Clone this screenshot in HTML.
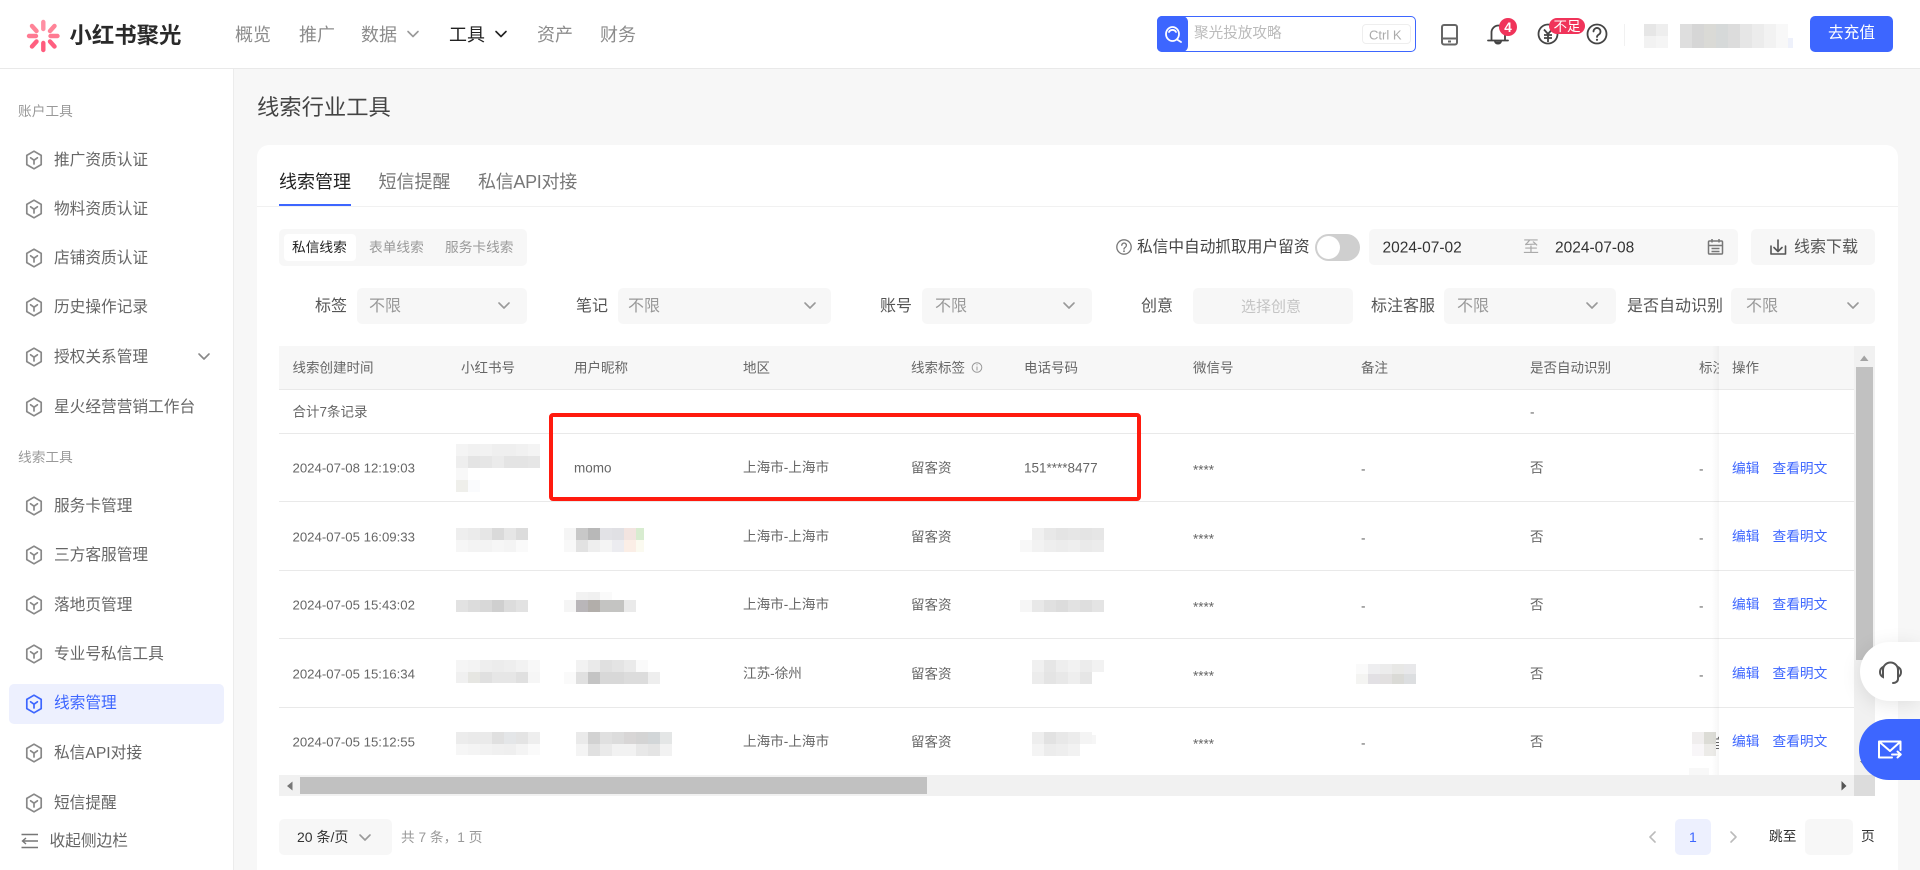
<!DOCTYPE html>
<html lang="zh-CN"><head><meta charset="utf-8"><title>线索行业工具</title>
<style>
html,body{margin:0;padding:0;width:1920px;height:870px;overflow:hidden;background:#f7f7f7}
body{position:relative;font-family:"Liberation Sans","Noto Sans CJK SC",sans-serif;color:#666}
.b{position:absolute}
.t{position:absolute;white-space:nowrap;line-height:1;transform:translateY(-50%)}
.n{font-size:18px;color:#8c8c8c;top:35px}
.s{font-size:15.7px;color:#666;left:54px}
.g{font-size:13.7px;color:#999}
.h{font-size:13.5px;color:#666;top:368px}
.d{font-size:13.5px;color:#666}
.f{font-size:16px;color:#555;top:307px}
.x{font-size:16px;color:#999;top:307px}
.sel{position:absolute;background:#f7f7f7;border-radius:5px;height:36px;top:288px}
.l{position:absolute;height:1px;background:#e9e9e9;left:279px;width:1575px}
.a{font-size:13.7px;color:#3d66ff}
</style></head>
<body>
<!-- header -->
<div class="b" style="left:0;top:0;width:1920px;height:68px;background:#fff;border-bottom:1px solid #e9e9e9"></div>
<div class="t" style="left:69.500px;top:36px;font-size:22.4px;font-weight:700;color:#2a2a2a">小红书聚光</div>
<div class="t n" style="left:235px">概览</div>
<div class="t n" style="left:299px">推广</div>
<div class="t n" style="left:361px">数据</div>
<div class="t n" style="left:449px;color:#222">工具</div>
<div class="t n" style="left:537px">资产</div>
<div class="t n" style="left:600px">财务</div>
<div class="b" style="left:1157px;top:16px;width:259px;height:36px;box-sizing:border-box;background:#fff;border:1px solid #3d66ff;border-radius:5px"></div>
<div class="b" style="left:1157px;top:16px;width:31px;height:36px;background:#3d66ff;border-radius:5px 6px 6px 5px"></div>
<div class="t" style="left:1194px;top:34px;font-size:14.6px;color:#bbb">聚光投放攻略</div>
<div class="b" style="left:1362px;top:24px;width:49px;height:20px;box-sizing:border-box;border:1px solid #eee;border-radius:4px"></div>
<div class="t" style="left:1369px;top:35px;font-size:13px;color:#aaa">Ctrl K</div>
<div class="b" style="left:1624px;top:24px;width:1px;height:22px;background:#f1f1f1"></div>
<svg class="b" style="left:1640px;top:14px" width="170" height="44">
<g shape-rendering="crispEdges">
<rect x="4" y="10" width="12" height="12" fill="#e6e6e6"/><rect x="16" y="10" width="12" height="12" fill="#eeeeee"/>
<rect x="4" y="22" width="12" height="12" fill="#f2f2f2"/><rect x="16" y="22" width="12" height="12" fill="#f5f5f5"/>
<rect x="40" y="10" width="12" height="24" fill="#dedede"/><rect x="52" y="10" width="12" height="24" fill="#d6d6d6"/>
<rect x="64" y="10" width="12" height="24" fill="#dadad6"/><rect x="76" y="10" width="12" height="24" fill="#d6d9d9"/>
<rect x="88" y="10" width="12" height="24" fill="#dcdcdc"/><rect x="100" y="10" width="12" height="24" fill="#e6e6e6"/>
<rect x="112" y="10" width="12" height="24" fill="#ececec"/><rect x="124" y="10" width="12" height="24" fill="#f2f2f2"/>
<rect x="136" y="10" width="12" height="24" fill="#f8f8f8"/><rect x="148" y="24" width="5" height="10" fill="#eef1fb"/>
</g></svg>
<div class="b" style="left:1810px;top:16px;width:83px;height:36px;background:#3d66ff;border-radius:5px"></div>
<div class="t" style="left:1828px;top:34px;font-size:15.7px;color:#fff">去充值</div>

<!-- sidebar -->
<div class="b" style="left:0;top:69px;width:233px;height:801px;background:#fff;border-right:1px solid #ececec"></div>
<div class="t g" style="left:18px;top:112px">账户工具</div>
<div class="t s" style="top:161px">推广资质认证</div>
<div class="t s" style="top:210px">物料资质认证</div>
<div class="t s" style="top:259px">店铺资质认证</div>
<div class="t s" style="top:308px">历史操作记录</div>
<div class="t s" style="top:358px">授权关系管理</div>
<div class="t s" style="top:408px">星火经营营销工作台</div>
<div class="t g" style="left:18px;top:458px">线索工具</div>
<div class="t s" style="top:507px">服务卡管理</div>
<div class="t s" style="top:556px">三方客服管理</div>
<div class="t s" style="top:606px">落地页管理</div>
<div class="t s" style="top:655px">专业号私信工具</div>
<div class="b" style="left:9px;top:684px;width:215px;height:40px;background:#edf0fe;border-radius:5px"></div>
<div class="t s" style="top:704px;color:#3d66ff">线索管理</div>
<div class="t s" style="top:754px">私信API对接</div>
<div class="t s" style="top:804px">短信提醒</div>
<div class="t s" style="left:49.500px;top:842px">收起侧边栏</div>

<!-- main -->
<div class="t" style="left:257px;top:108px;font-size:22.3px;color:#444">线索行业工具</div>
<div class="b" style="left:257px;top:145px;width:1641px;height:740px;background:#fff;border-radius:12px"></div>
<div class="b" style="left:257px;top:206px;width:1641px;height:1px;background:#f1f1f1"></div>
<div class="b" style="left:279px;top:204px;width:72px;height:2px;background:#3d66ff"></div>
<div class="t" style="left:279px;top:182px;font-size:18px;color:#222">线索管理</div>
<div class="t" style="left:378.500px;top:182px;font-size:18px;color:#777">短信提醒</div>
<div class="t" style="left:478px;top:182px;font-size:18px;color:#777;letter-spacing:-.3px">私信API对接</div>

<div class="b" style="left:279px;top:229px;width:248px;height:37px;background:#f7f7f7;border-radius:5px"></div>
<div class="b" style="left:284px;top:234px;width:72px;height:27px;background:#fff;border-radius:4px"></div>
<div class="t" style="left:292px;top:248px;font-size:13.7px;color:#222">私信线索</div>
<div class="t" style="left:369px;top:248px;font-size:13.7px;color:#999">表单线索</div>
<div class="t" style="left:445px;top:248px;font-size:13.7px;color:#999">服务卡线索</div>

<div class="t" style="left:1137px;top:248px;font-size:15.7px;color:#444">私信中自动抓取用户留资</div>
<div class="b" style="left:1315px;top:234px;width:45px;height:27px;background:#cfcfcf;border-radius:14px"></div>
<div class="b" style="left:1317px;top:236px;width:23px;height:23px;background:#fff;border-radius:50%"></div>
<div class="b" style="left:1369px;top:229px;width:369px;height:36px;background:#f7f7f7;border-radius:5px"></div>
<div class="t" style="left:1382.500px;top:248px;font-size:15.500px;color:#333">2024-07-02</div>
<div class="t" style="left:1523px;top:248px;font-size:16px;color:#aaa">至</div>
<div class="t" style="left:1555px;top:248px;font-size:15.500px;color:#333">2024-07-08</div>
<div class="b" style="left:1751px;top:229px;width:124px;height:36px;background:#f7f7f7;border-radius:5px"></div>
<div class="t" style="left:1794px;top:248px;font-size:16px;color:#555">线索下载</div>

<!-- filters -->
<div class="sel" style="left:357px;width:170px"></div><div class="sel" style="left:618px;width:213px"></div><div class="sel" style="left:922px;width:170px"></div><div class="sel" style="left:1193px;width:160px"></div><div class="sel" style="left:1444px;width:172px"></div><div class="sel" style="left:1731px;width:144px"></div>
<div class="t f" style="left:315px">标签</div><div class="t x" style="left:369px">不限</div>
<div class="t f" style="left:576px">笔记</div><div class="t x" style="left:628px">不限</div>
<div class="t f" style="left:880px">账号</div><div class="t x" style="left:935px">不限</div>
<div class="t f" style="left:1141px">创意</div><div class="t" style="left:1241px;top:307px;font-size:15px;color:#c4c4c4">选择创意</div>
<div class="t f" style="left:1371px">标注客服</div><div class="t x" style="left:1457px">不限</div>
<div class="t f" style="left:1627px">是否自动识别</div><div class="t x" style="left:1746px">不限</div>

<!-- table -->
<div class="b" style="left:279px;top:346px;width:1575px;height:43px;background:#f7f7f7"></div>
<div class="l" style="top:389px"></div><div class="l" style="top:433px"></div><div class="l" style="top:501px"></div>
<div class="l" style="top:570px"></div><div class="l" style="top:638px"></div><div class="l" style="top:707px"></div>

<div class="t h" style="left:292.500px">线索创建时间</div><div class="t h" style="left:461px">小红书号</div><div class="t h" style="left:574px">用户昵称</div>
<div class="t h" style="left:743px">地区</div><div class="t h" style="left:911px">线索标签</div><div class="t h" style="left:1024px">电话号码</div>
<div class="t h" style="left:1193px">微信号</div><div class="t h" style="left:1361px">备注</div><div class="t h" style="left:1530px">是否自动识别</div><div class="t h" style="left:1699px">标注</div>

<div class="t d" style="left:292.500px;top:412px">合计7条记录</div><div class="t d" style="left:1530px;top:412px">-</div>

<div class="t d" style="left:292.500px;top:468px;font-size:13.200px">2024-07-08 12:19:03</div><div class="t d" style="left:574px;top:468px">momo</div><div class="t d" style="left:743px;top:468px;font-size:13.600px">上海市-上海市</div><div class="t d" style="left:911px;top:468px">留客资</div><div class="t d" style="left:1024px;top:468px">151****8477</div><div class="t d" style="left:1193px;top:470px">****</div><div class="t d" style="left:1361px;top:469px">-</div><div class="t d" style="left:1530px;top:468px">否</div><div class="t d" style="left:1699px;top:469px">-</div>

<div class="t d" style="left:292.500px;top:537px;font-size:13.200px">2024-07-05 16:09:33</div><div class="t d" style="left:743px;top:537px;font-size:13.600px">上海市-上海市</div><div class="t d" style="left:911px;top:537px">留客资</div><div class="t d" style="left:1193px;top:539px">****</div><div class="t d" style="left:1361px;top:538px">-</div><div class="t d" style="left:1530px;top:537px">否</div><div class="t d" style="left:1699px;top:538px">-</div>

<div class="t d" style="left:292.500px;top:605px;font-size:13.200px">2024-07-05 15:43:02</div><div class="t d" style="left:743px;top:605px;font-size:13.600px">上海市-上海市</div><div class="t d" style="left:911px;top:605px">留客资</div><div class="t d" style="left:1193px;top:607px">****</div><div class="t d" style="left:1361px;top:606px">-</div><div class="t d" style="left:1530px;top:605px">否</div><div class="t d" style="left:1699px;top:606px">-</div>

<div class="t d" style="left:292.500px;top:674px;font-size:13.200px">2024-07-05 15:16:34</div><div class="t d" style="left:743px;top:674px;font-size:13.600px">江苏-徐州</div><div class="t d" style="left:911px;top:674px">留客资</div><div class="t d" style="left:1193px;top:676px">****</div><div class="t d" style="left:1530px;top:674px">否</div><div class="t d" style="left:1699px;top:675px">-</div>

<div class="t d" style="left:292.500px;top:742px;font-size:13.200px">2024-07-05 15:12:55</div><div class="t d" style="left:743px;top:742px;font-size:13.600px">上海市-上海市</div><div class="t d" style="left:911px;top:742px">留客资</div><div class="t d" style="left:1193px;top:744px">****</div><div class="t d" style="left:1361px;top:743px">-</div><div class="t d" style="left:1530px;top:742px">否</div><div class="t d" style="left:1712px;top:744px">自</div>

<!-- mosaics -->
<svg class="b" style="left:0;top:0" width="1920" height="870"><g shape-rendering="crispEdges">
<rect x="456" y="444" width="12" height="12" fill="#f4f4f4"/><rect x="468" y="444" width="12" height="12" fill="#f1f1f1"/><rect x="480" y="444" width="12" height="12" fill="#f2f2f2"/><rect x="492" y="444" width="12" height="12" fill="#efefef"/><rect x="504" y="444" width="12" height="12" fill="#efefef"/><rect x="516" y="444" width="12" height="12" fill="#f1f1f1"/><rect x="528" y="444" width="12" height="12" fill="#f4f4f4"/>
<rect x="456" y="456" width="12" height="12" fill="#eeeeee"/><rect x="468" y="456" width="12" height="12" fill="#e4e4e4"/><rect x="480" y="456" width="12" height="12" fill="#e6e6e6"/><rect x="492" y="456" width="12" height="12" fill="#ebebeb"/><rect x="504" y="456" width="12" height="12" fill="#e4e4e4"/><rect x="516" y="456" width="12" height="12" fill="#e4e4e4"/><rect x="528" y="456" width="12" height="12" fill="#e6e6e6"/>
<rect x="456" y="468" width="12" height="12" fill="#f8f8f8"/><rect x="456" y="480" width="12" height="12" fill="#efefeb"/><rect x="468" y="480" width="12" height="12" fill="#fafbfd"/>
<rect x="456" y="528" width="12" height="12" fill="#eeeeee"/><rect x="468" y="528" width="12" height="12" fill="#ebebeb"/><rect x="480" y="528" width="12" height="12" fill="#e6e6e6"/><rect x="492" y="528" width="12" height="12" fill="#dadada"/><rect x="504" y="528" width="12" height="12" fill="#e6e6e6"/><rect x="516" y="528" width="12" height="12" fill="#dcdcdc"/>
<rect x="456" y="540" width="12" height="12" fill="#f6f6f6"/><rect x="468" y="540" width="12" height="12" fill="#f3f3f3"/><rect x="480" y="540" width="12" height="12" fill="#f3f3f3"/><rect x="492" y="540" width="12" height="12" fill="#f6f6f6"/><rect x="504" y="540" width="12" height="12" fill="#f4f4f4"/><rect x="516" y="540" width="12" height="12" fill="#fafafa"/>
<rect x="564" y="528" width="12" height="12" fill="#f5f5f5"/><rect x="576" y="528" width="12" height="12" fill="#c8c8c8"/><rect x="588" y="528" width="12" height="12" fill="#b8b8b8"/><rect x="600" y="528" width="12" height="12" fill="#e2e2e6"/><rect x="612" y="528" width="12" height="12" fill="#e0e0e4"/><rect x="624" y="528" width="12" height="12" fill="#f2e4e0"/><rect x="636" y="528" width="8" height="12" fill="#d8ecd0"/>
<rect x="564" y="540" width="12" height="12" fill="#f8f8f8"/><rect x="576" y="540" width="12" height="12" fill="#e2e2e2"/><rect x="588" y="540" width="12" height="12" fill="#eeeeee"/><rect x="600" y="540" width="12" height="12" fill="#f4f4f4"/><rect x="612" y="540" width="12" height="12" fill="#ececf0"/><rect x="624" y="540" width="12" height="12" fill="#fbeee6"/><rect x="636" y="540" width="8" height="12" fill="#fbfaf0"/>
<rect x="456" y="600" width="12" height="12" fill="#e2e2e2"/><rect x="468" y="600" width="12" height="12" fill="#dcdcdc"/><rect x="480" y="600" width="12" height="12" fill="#d8d8d8"/><rect x="492" y="600" width="12" height="12" fill="#cfcfcf"/><rect x="504" y="600" width="12" height="12" fill="#dcdcdc"/><rect x="516" y="600" width="12" height="12" fill="#e2e2e2"/>
<rect x="576" y="592" width="12" height="8" fill="#f2f2f2"/><rect x="588" y="592" width="12" height="8" fill="#f0f0f0"/><rect x="600" y="592" width="12" height="8" fill="#fafafa"/>
<rect x="564" y="600" width="12" height="12" fill="#f5f5f5"/><rect x="576" y="600" width="12" height="12" fill="#b9b6b9"/><rect x="588" y="600" width="12" height="12" fill="#b2aeaa"/><rect x="600" y="600" width="12" height="12" fill="#c4c4c2"/><rect x="612" y="600" width="12" height="12" fill="#c4c4c2"/><rect x="624" y="600" width="12" height="12" fill="#eaeaea"/>
<rect x="456" y="660" width="12" height="12" fill="#f5f5f5"/><rect x="468" y="660" width="12" height="12" fill="#f3f3f3"/><rect x="480" y="660" width="12" height="12" fill="#eeeeee"/><rect x="492" y="660" width="12" height="12" fill="#ececec"/><rect x="504" y="660" width="12" height="12" fill="#eeeeee"/><rect x="516" y="660" width="12" height="12" fill="#f2f2f2"/><rect x="528" y="660" width="12" height="12" fill="#f8f8f8"/>
<rect x="456" y="672" width="12" height="11" fill="#f0f0f0"/><rect x="468" y="672" width="12" height="11" fill="#e6e6e2"/><rect x="480" y="672" width="12" height="11" fill="#e0e0e0"/><rect x="492" y="672" width="12" height="11" fill="#e6e6e6"/><rect x="504" y="672" width="12" height="11" fill="#e6e6e6"/><rect x="516" y="672" width="12" height="11" fill="#e0e0e0"/><rect x="528" y="672" width="12" height="11" fill="#f6f6f6"/>
<rect x="576" y="660" width="12" height="12" fill="#f2f2f2"/><rect x="588" y="660" width="12" height="12" fill="#eaeaea"/><rect x="600" y="660" width="12" height="12" fill="#e0e0e0"/><rect x="612" y="660" width="12" height="12" fill="#e4e4e4"/><rect x="624" y="660" width="12" height="12" fill="#eaeaea"/><rect x="636" y="660" width="12" height="12" fill="#fafafa"/>
<rect x="564" y="672" width="12" height="12" fill="#fafafa"/><rect x="576" y="672" width="12" height="12" fill="#e0e0e0"/><rect x="588" y="672" width="12" height="12" fill="#c4c4c4"/><rect x="600" y="672" width="12" height="12" fill="#d8d8d8"/><rect x="612" y="672" width="12" height="12" fill="#d8d8d8"/><rect x="624" y="672" width="12" height="12" fill="#dcdcdc"/><rect x="636" y="672" width="12" height="12" fill="#dcdcdc"/><rect x="648" y="672" width="12" height="12" fill="#eeeeee"/>
<rect x="456" y="732" width="12" height="12" fill="#ececec"/><rect x="468" y="732" width="12" height="12" fill="#eaeaea"/><rect x="480" y="732" width="12" height="12" fill="#eaeaea"/><rect x="492" y="732" width="12" height="12" fill="#e0e0e0"/><rect x="504" y="732" width="12" height="12" fill="#e4e6e8"/><rect x="516" y="732" width="12" height="12" fill="#e4e4e4"/><rect x="528" y="732" width="12" height="12" fill="#eeeeee"/>
<rect x="456" y="744" width="12" height="11" fill="#f6f6f6"/><rect x="468" y="744" width="12" height="11" fill="#f4f4f4"/><rect x="480" y="744" width="12" height="11" fill="#f2f2f2"/><rect x="492" y="744" width="12" height="11" fill="#f0f0f0"/><rect x="504" y="744" width="12" height="11" fill="#efefef"/><rect x="516" y="744" width="12" height="11" fill="#f4f4f4"/><rect x="528" y="744" width="12" height="11" fill="#fafafa"/>
<rect x="576" y="732" width="12" height="12" fill="#eaeaea"/><rect x="588" y="732" width="12" height="12" fill="#d2d2d2"/><rect x="600" y="732" width="12" height="12" fill="#e0e0e0"/><rect x="612" y="732" width="12" height="12" fill="#dcdcdc"/><rect x="624" y="732" width="12" height="12" fill="#d8d6d6"/><rect x="636" y="732" width="12" height="12" fill="#d4d4d4"/><rect x="648" y="732" width="12" height="12" fill="#d2d6d8"/><rect x="660" y="732" width="12" height="12" fill="#e4e6e6"/>
<rect x="576" y="744" width="12" height="12" fill="#f4f4f4"/><rect x="588" y="744" width="12" height="12" fill="#e0e0e0"/><rect x="600" y="744" width="12" height="12" fill="#eaeaea"/><rect x="612" y="744" width="12" height="12" fill="#f2f2f2"/><rect x="624" y="744" width="12" height="12" fill="#f2f2f2"/><rect x="636" y="744" width="12" height="12" fill="#e8e8e8"/><rect x="648" y="744" width="12" height="12" fill="#e4e4e4"/><rect x="660" y="744" width="12" height="12" fill="#f2f2f2"/>
<rect x="1032" y="528" width="12" height="12" fill="#f0f0f0"/><rect x="1044" y="528" width="12" height="12" fill="#e8e8e8"/><rect x="1056" y="528" width="12" height="12" fill="#e4e4e4"/><rect x="1068" y="528" width="12" height="12" fill="#e6e6e6"/><rect x="1080" y="528" width="12" height="12" fill="#e4e4e4"/><rect x="1092" y="528" width="12" height="12" fill="#e6e6e6"/>
<rect x="1020" y="540" width="12" height="12" fill="#f8f8f8"/><rect x="1032" y="540" width="12" height="12" fill="#f2f2f2"/><rect x="1044" y="540" width="12" height="12" fill="#eeeeee"/><rect x="1056" y="540" width="12" height="12" fill="#ececec"/><rect x="1068" y="540" width="12" height="12" fill="#eeeeee"/><rect x="1080" y="540" width="12" height="12" fill="#eaeaea"/><rect x="1092" y="540" width="12" height="12" fill="#ececec"/>
<rect x="1020" y="600" width="12" height="12" fill="#f6f6f6"/><rect x="1032" y="600" width="12" height="12" fill="#e8e8e8"/><rect x="1044" y="600" width="12" height="12" fill="#e0e0e0"/><rect x="1056" y="600" width="12" height="12" fill="#dcdcdc"/><rect x="1068" y="600" width="12" height="12" fill="#e2e2e2"/><rect x="1080" y="600" width="12" height="12" fill="#dedede"/><rect x="1092" y="600" width="12" height="12" fill="#e4e4e4"/>
<rect x="1032" y="660" width="12" height="12" fill="#f0f0f0"/><rect x="1044" y="660" width="12" height="12" fill="#e6e6e6"/><rect x="1056" y="660" width="12" height="12" fill="#eeeeee"/><rect x="1068" y="660" width="12" height="12" fill="#f2f2f2"/><rect x="1080" y="660" width="12" height="12" fill="#ececec"/><rect x="1092" y="660" width="12" height="12" fill="#f2f2f2"/>
<rect x="1032" y="672" width="12" height="12" fill="#ececec"/><rect x="1044" y="672" width="12" height="12" fill="#e4e4e4"/><rect x="1056" y="672" width="12" height="12" fill="#e8e8e8"/><rect x="1068" y="672" width="12" height="12" fill="#eeeeee"/><rect x="1080" y="672" width="12" height="12" fill="#e6e6e6"/>
<rect x="1032" y="732" width="12" height="12" fill="#eeeeee"/><rect x="1044" y="732" width="12" height="12" fill="#e2e2e2"/><rect x="1056" y="732" width="12" height="12" fill="#e8e8e8"/><rect x="1068" y="732" width="12" height="12" fill="#ececec"/><rect x="1080" y="732" width="12" height="12" fill="#f4f4f4"/><rect x="1092" y="735" width="4" height="9" fill="#f6f6f6"/>
<rect x="1032" y="744" width="12" height="12" fill="#f4f4f4"/><rect x="1044" y="744" width="12" height="12" fill="#ececec"/><rect x="1056" y="744" width="12" height="12" fill="#eeeeee"/><rect x="1068" y="744" width="12" height="12" fill="#f2f2f2"/>
<rect x="1356" y="664" width="12" height="10" fill="#fafafa"/><rect x="1368" y="664" width="12" height="10" fill="#eeeef0"/><rect x="1380" y="664" width="12" height="10" fill="#ececec"/><rect x="1392" y="664" width="12" height="10" fill="#e8e8e6"/><rect x="1404" y="664" width="12" height="10" fill="#e8e8ea"/>
<rect x="1356" y="674" width="12" height="10" fill="#f4f4f2"/><rect x="1368" y="674" width="12" height="10" fill="#e2e0e4"/><rect x="1380" y="674" width="12" height="10" fill="#e2e0e0"/><rect x="1392" y="674" width="12" height="10" fill="#dadad6"/><rect x="1404" y="674" width="12" height="10" fill="#dcdee0"/>
<rect x="1692" y="732" width="12" height="12" fill="#f0eeee"/><rect x="1704" y="732" width="12" height="12" fill="#dcdcd6"/><rect x="1692" y="744" width="12" height="12" fill="#f8f6f8"/><rect x="1704" y="744" width="12" height="12" fill="#ecebe8"/>
<rect x="1689" y="768" width="20" height="7" fill="#f8f8f8"/>
</g></svg>

<!-- fixed column -->
<div class="b" style="left:1712px;top:346px;width:7px;height:429px;background:linear-gradient(90deg,rgba(0,0,0,0),rgba(0,0,0,.035))"></div>
<div class="b" style="left:1719px;top:346px;width:135px;height:429px;background:#fff"></div>
<div class="b" style="left:1719px;top:346px;width:135px;height:43px;background:#f7f7f7"></div>
<div class="l" style="left:1719px;width:135px;top:389px"></div><div class="l" style="left:1719px;width:135px;top:433px"></div><div class="l" style="left:1719px;width:135px;top:501px"></div>
<div class="l" style="left:1719px;width:135px;top:570px"></div><div class="l" style="left:1719px;width:135px;top:638px"></div><div class="l" style="left:1719px;width:135px;top:707px"></div>
<div class="t h" style="left:1732px">操作</div>
<div class="t a" style="left:1732px;top:469px">编辑</div><div class="t a" style="left:1772.500px;top:469px">查看明文</div>
<div class="t a" style="left:1732px;top:537px">编辑</div><div class="t a" style="left:1772.500px;top:537px">查看明文</div>
<div class="t a" style="left:1732px;top:605px">编辑</div><div class="t a" style="left:1772.500px;top:605px">查看明文</div>
<div class="t a" style="left:1732px;top:674px">编辑</div><div class="t a" style="left:1772.500px;top:674px">查看明文</div>
<div class="t a" style="left:1732px;top:742px">编辑</div><div class="t a" style="left:1772.500px;top:742px">查看明文</div>

<!-- scrollbars -->
<div class="b" style="left:1854px;top:346px;width:21px;height:429px;background:#f1f1f1"></div>
<div class="b" style="left:1856px;top:367px;width:17px;height:293px;background:#c1c1c1"></div>
<div class="b" style="left:279px;top:775px;width:1575px;height:21px;background:#f1f1f1"></div>
<div class="b" style="left:300px;top:777px;width:627px;height:17px;background:#c1c1c1"></div>
<div class="b" style="left:1854px;top:775px;width:21px;height:21px;background:#dcdcdc"></div>

<!-- red highlight -->
<div class="b" style="left:549px;top:413px;width:592px;height:88px;box-sizing:border-box;border:4px solid #ff1a0e;border-radius:4px"></div>

<!-- pagination -->
<div class="b" style="left:279px;top:819px;width:113px;height:36px;background:#f7f7f7;border-radius:5px"></div>
<div class="t" style="left:297px;top:837px;font-size:14px;color:#333">20 条/页</div>
<div class="t" style="left:401px;top:838px;font-size:13.7px;color:#999">共 7 条，1 页</div>
<div class="b" style="left:1675px;top:819px;width:36px;height:36px;background:#edf0fe;border-radius:5px"></div>
<div class="t" style="left:1689px;top:837px;font-size:14px;color:#3d66ff">1</div>
<div class="t" style="left:1769px;top:837px;font-size:13.7px;color:#333">跳至</div>
<div class="b" style="left:1805px;top:819px;width:48px;height:36px;background:#f7f7f7;border-radius:5px"></div>
<div class="t" style="left:1861px;top:837px;font-size:13.7px;color:#333">页</div>

<!-- floats -->
<svg class="b" style="left:1855px;top:755px" width="20" height="20"><path d="M5 6h10l-5 6z" fill="#777"/></svg>
<div class="b" style="left:1860px;top:642px;width:60px;height:59px;background:#fff;border-radius:30px 0 0 30px;box-shadow:0 4px 20px rgba(0,0,0,.1)"></div>
<div class="b" style="left:1859px;top:719px;width:61px;height:61px;background:#3d66ff;border-radius:30px 0 0 30px"></div>

<!-- icons -->
<svg class="b" style="left:0;top:0;pointer-events:none" width="1920" height="870">
<defs>
<symbol id="hx" viewBox="0 0 18 20" overflow="visible"><path d="M9 1.2 16.2 5.4V14.6L9 18.8 1.8 14.6V5.4Z" fill="none" stroke="currentColor" stroke-width="1.7" stroke-linejoin="round"/><path d="M5.6 7.8 9 10.2 12.4 7.8M9 10.2V14" fill="none" stroke="currentColor" stroke-width="1.7" stroke-linecap="round"/></symbol>
</defs>
<!-- logo -->
<g stroke-width="4.4" stroke-linecap="round" fill="none">
<path d="M43.300 22V29" stroke="#ff8fa3"/><path d="M43.300 43V50" stroke="#ff5c7e"/>
<path d="M32 26 36.500 31" stroke="#ff8397"/><path d="M54.500 26 50 31" stroke="#ff8397"/><path d="M29 36H36" stroke="#ff7a92"/><path d="M50.500 36H57.500" stroke="#ff7a92"/><path d="M32 46.500 36.500 41.500" stroke="#ff5f80"/><path d="M54.500 46.500 50 41.500" stroke="#ff5f80"/>
</g>
<!-- nav chevrons -->
<g fill="none" stroke-width="1.6" stroke-linecap="round" stroke-linejoin="round">
<path d="M408 31.500 413 36.500 418 31.500" stroke="#999"/><path d="M496 31.500 501 36.500 506 31.500" stroke="#222"/>
<path d="M199 354 204 359 209 354" stroke="#888"/>
<path d="M499 303 504 308 509 303" stroke="#999"/><path d="M805 303 810 308 815 303" stroke="#999"/><path d="M1064 303 1069 308 1074 303" stroke="#999"/><path d="M1587 303 1592 308 1597 303" stroke="#999"/><path d="M1848 303 1853 308 1858 303" stroke="#999"/>
<path d="M360 835 365 840 370 835" stroke="#999"/>
<path d="M1655 832 1650 837 1655 842" stroke="#bbb"/><path d="M1731 832 1736 837 1731 842" stroke="#bbb"/>
</g>
<!-- search -->
<g fill="none" stroke="#fff" stroke-width="1.8" stroke-linecap="round"><ellipse cx="1172.500" cy="34" rx="6.500" ry="7"/><path d="M1177 39.500 1181 42"/><path d="M1169 32a4 4 0 0 1 7 0"/></g>
<!-- phone -->
<g fill="none" stroke="#666" stroke-width="2"><rect x="1442" y="25" width="15" height="19.500" rx="2"/><path d="M1442 38.500H1457"/><path d="M1448 41.500H1451"/></g>
<!-- bell -->
<g fill="none" stroke="#444" stroke-width="1.8" stroke-linecap="round"><path d="M1491.500 40V33a7 7 0 0 1 7-7.500c3.500 0 6 2.500 6.500 6V40"/><path d="M1488 40.500H1508"/><path d="M1495 41.500a3.200 3.200 0 0 0 6 0" fill="#444"/></g>
<circle cx="1508" cy="27" r="9" fill="#f0345a"/>
<text x="1508" y="32" text-anchor="middle" font-family="Liberation Sans" font-weight="700" font-size="13.500" fill="#fff">4</text>
<!-- yuan + badge -->
<g fill="none" stroke="#444" stroke-width="1.8"><circle cx="1548" cy="34" r="9.500"/><path d="M1544 29.500 1548 34 1552 29.500M1544 35H1552M1544 38H1552M1548 34V42"/></g>
<rect x="1549" y="18" width="36" height="16" rx="8" fill="#f0345a"/>
<text x="1567" y="31" text-anchor="middle" font-family="Noto Sans CJK SC" font-size="13.500" fill="#fff">不足</text>
<!-- help -->
<g fill="none" stroke="#444" stroke-width="1.8"><circle cx="1597" cy="34" r="9.500"/><path d="M1593.500 31.500a3.500 3.500 0 1 1 5.300 3c-1.200.8-1.800 1.400-1.800 2.500" stroke-linecap="round"/></g><circle cx="1597" cy="39.800" r="1.100" fill="#444"/>
<!-- toggle help -->
<g fill="none" stroke="#777" stroke-width="1.300"><circle cx="1124" cy="247" r="7.200"/><path d="M1121.800 245.300a2.300 2.300 0 1 1 3.500 2c-.8.500-1.300 1-1.300 1.800" stroke-linecap="round"/></g><circle cx="1124" cy="251.200" r=".9" fill="#777"/>
<!-- calendar -->
<g fill="none" stroke="#777" stroke-width="1.500"><rect x="1708.500" y="241" width="14" height="13" rx="1"/><path d="M1708.500 245.500H1722.500M1712 239V242.500M1719 239V242.500M1711.500 248.500H1719.500M1711.500 251.500H1719.500"/></g>
<!-- download -->
<g fill="none" stroke="#555" stroke-width="1.600" stroke-linecap="round" stroke-linejoin="round"><path d="M1778 240V251M1774 247.500 1778 251.500 1782 247.500"/><path d="M1771 246V254H1785.500V246"/></g>
<!-- label info -->
<g fill="none" stroke="#999" stroke-width="1"><circle cx="977" cy="367.500" r="4.800"/><path d="M977 366.500V370.500"/><path d="M977 364.300V365.300"/></g>
<!-- scroll arrows -->
<path d="M1860 361H1868.500L1864.200 355.500Z" fill="#a3a3a3"/>
<path d="M292.500 781.500V790.500L287 786Z" fill="#777"/>
<path d="M1841.500 781V790.500L1846.500 786Z" fill="#555"/>
<!-- sidebar icons -->
<g color="#888">
<use href="#hx" x="25" y="150" width="18" height="20"/><use href="#hx" x="25" y="199" width="18" height="20"/><use href="#hx" x="25" y="248" width="18" height="20"/><use href="#hx" x="25" y="297" width="18" height="20"/><use href="#hx" x="25" y="347" width="18" height="20"/><use href="#hx" x="25" y="397" width="18" height="20"/>
<use href="#hx" x="25" y="496" width="18" height="20"/><use href="#hx" x="25" y="545" width="18" height="20"/><use href="#hx" x="25" y="595" width="18" height="20"/><use href="#hx" x="25" y="644" width="18" height="20"/><use href="#hx" x="25" y="743" width="18" height="20"/><use href="#hx" x="25" y="793" width="18" height="20"/>
</g>
<use href="#hx" x="25" y="694" width="18" height="20" color="#3d66ff"/>
<!-- collapse -->
<g fill="none" stroke="#777" stroke-width="1.400"><path d="M21.500 834.500H38M23 841H38M21.500 847.500H38"/><path d="M26 838 22.500 841 26 844"/></g>
<!-- headset -->
<g fill="none" stroke="#555" stroke-width="2" stroke-linecap="round"><path d="M1883 675v-5a7.500 7.500 0 0 1 15 0v9c0 2.500-2.500 4-5 4"/><path d="M1883 667c-2 1-3 3-3 5s1 4 3 5zM1898 667c2 1 3 3 3 5s-1 4-3 5z"/></g>
<!-- mail -->
<g fill="none" stroke="#fff" stroke-width="2" stroke-linejoin="round" stroke-linecap="round"><path d="M1892 757.500H1879V741.500H1900.500V750"/><path d="M1879.500 742 1890 751 1900 742"/><path d="M1892 754.500H1900M1897.500 751.500 1900.800 754.500 1897.500 757.500"/></g>
</svg>
</body></html>
